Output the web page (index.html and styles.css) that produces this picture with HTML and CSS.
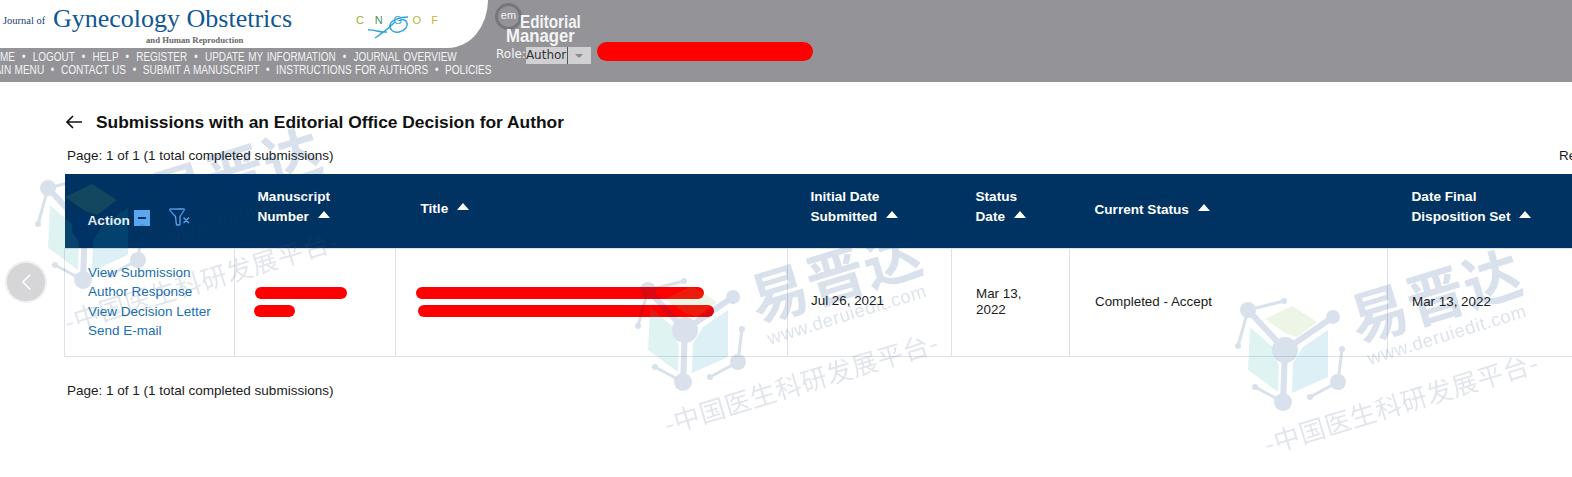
FILE: index.html
```html
<!DOCTYPE html>
<html lang="en">
<head>
<meta charset="utf-8">
<title>Submissions with an Editorial Office Decision for Author</title>
<link rel="stylesheet" href="styles.css">
</head>
<body>
<header class="top">
  <div class="brand">
    <div class="logo">
      <div class="journal">
        <span class="journal-of">Journal of</span>
        <span class="journal-name">Gynecology Obstetrics</span>
        <span class="journal-sub">and Human Reproduction</span>
      </div>
      <div class="cngof">
        <span class="c1">C</span><span class="c2">N</span><span class="c3">G</span><span class="c4">O</span><span class="c5">F</span>
        <svg class="swoosh" viewBox="0 0 42 24" aria-hidden="true"><path d="M40 1C32 1 23 4 22 9c-1 5 4 8 9 7 6-1 9-6 8-9-1-3-4-4-7-3M0 14c6-1 12 3 19 2M7 22C13 18 21 12 27 6" fill="none" stroke="#2ea3dc" stroke-width="1.4"/></svg>
      </div>
    </div>
    <nav class="nav">
      <div class="nav-line nav-one">HOME &nbsp;•&nbsp; LOGOUT &nbsp;•&nbsp; HELP &nbsp;•&nbsp; REGISTER &nbsp;•&nbsp; UPDATE MY INFORMATION &nbsp;•&nbsp; JOURNAL OVERVIEW</div>
      <div class="nav-line nav-two">MAIN MENU &nbsp;•&nbsp; CONTACT US &nbsp;•&nbsp; SUBMIT A MANUSCRIPT &nbsp;•&nbsp; INSTRUCTIONS FOR AUTHORS &nbsp;•&nbsp; POLICIES</div>
    </nav>
  </div>
  <div class="em">
    <div class="em-logo">
      <span class="em-ring">em</span>
      <span class="em-w1">Editorial</span>
      <span class="em-w2">Manager</span>
    </div>
    <div class="role-row">
      <span class="role-label">Role:</span>
      <span class="role-select"><span class="role-value">Author</span><span class="role-btn"><svg class="role-arrow" viewBox="0 0 8 4" aria-hidden="true"><path d="M0 0h8L4 4z" fill="#8a8a8a"/></svg></span></span>
      <span class="redact-top"></span>
    </div>
  </div>
</header>

<main class="main">
  <h1 class="title-row">
    <svg class="back" viewBox="0 0 18 14" aria-hidden="true"><path d="M17 7H2M8 1 2 7l6 6" fill="none" stroke="#111" stroke-width="1.7"/></svg>
    <span>Submissions with an Editorial Office Decision for Author</span>
  </h1>
  <div class="pager"><span>Page: 1 of 1 (1 total completed submissions)</span><span class="results">Results per page</span></div>
  <table class="grid">
    <colgroup>
      <col class="c-action"><col class="c-number"><col class="c-title"><col class="c-initial"><col class="c-date"><col class="c-status"><col class="c-final">
    </colgroup>
    <thead>
      <tr>
        <th class="th-action"><span class="action-head"><span class="action-label">Action</span><span class="minus"><span class="minus-bar"></span></span><svg class="filter" viewBox="0 0 22 18" aria-hidden="true"><path d="M1.500 1h13q1.500 0 .5 1.500L11 8.500V16q0 1-1 1H8.500Q7.500 17 7.300 16L6.500 8.500 1 2.500Q.5 1 1.500 1zM14.500 9.500l5.500 5.500M20 9.500 14.500 15" fill="none" stroke="#5aa7ef" stroke-width="1.300"/></svg></span></th>
        <th>Manuscript<br>Number<span class="sort"></span></th>
        <th class="th-title">Title<span class="sort"></span></th>
        <th>Initial Date<br>Submitted<span class="sort"></span></th>
        <th>Status<br>Date<span class="sort"></span></th>
        <th class="th-status">Current Status<span class="sort"></span></th>
        <th>Date Final<br>Disposition Set<span class="sort"></span></th>
      </tr>
    </thead>
    <tbody>
      <tr>
        <td class="links"><a href="#">View Submission</a><a href="#">Author Response</a><a href="#">View Decision Letter</a><a href="#">Send E-mail</a></td>
        <td class="redacted"><span class="bar bar-a"></span><span class="bar bar-b"></span></td>
        <td class="redacted"><span class="bar bar-c"></span><span class="bar bar-d"></span></td>
        <td class="cell-date">Jul 26, 2021</td>
        <td>Mar 13,<br>2022</td>
        <td>Completed - Accept</td>
        <td>Mar 13, 2022</td>
      </tr>
    </tbody>
  </table>
  <div class="pager pager-bottom"><span>Page: 1 of 1 (1 total completed submissions)</span></div>
</main>

<button class="prev" type="button" aria-label="Previous"><svg viewBox="0 0 12 20" aria-hidden="true"><path d="M10 2 2 10l8 8" fill="none" stroke="#fff" stroke-width="1.8"/></svg></button>

<svg class="defs" aria-hidden="true">
  <symbol id="wm-icon" viewBox="0 0 120 125">
    <path d="M35 24 62 11l25 16-20 15-12-4z" fill="#80bc58"/>
    <path d="M20 32l23 20 6 20-1 25-30-22z" fill="#30afaf"/>
    <path d="M98 35v47L62 98l1-30 10-16z" fill="#169bc3"/>
    <g stroke="#023780" fill="none">
      <path d="M18 15 55 55M103 22 55 55M55 55l-2 52" stroke-width="6"/>
      <path d="M18 15 54 6M18 15 8 51M53 107 25 92M108 87 80 102M108 87l4-33" stroke-width="3"/>
    </g>
    <g fill="#023780">
      <circle cx="55" cy="55" r="13"/><circle cx="18" cy="15" r="8"/><circle cx="103" cy="22" r="7"/><circle cx="53" cy="107" r="9"/><circle cx="108" cy="87" r="8"/>
      <circle cx="54" cy="6" r="3"/><circle cx="8" cy="51" r="3"/><circle cx="25" cy="92" r="3"/><circle cx="80" cy="102" r="3"/><circle cx="112" cy="54" r="3"/>
    </g>
  </symbol>
</svg>

<div class="wm wm-left">
  <svg class="wm-mark" aria-hidden="true"><use href="#wm-icon"/></svg>
  <span class="wm-brand">易晋达</span><span class="wm-url">www.deruiedit.com</span><span class="wm-slogan">-中国医生科研发展平台-</span>
</div>
<div class="wm wm-center">
  <svg class="wm-mark" aria-hidden="true"><use href="#wm-icon"/></svg>
  <span class="wm-brand">易晋达</span><span class="wm-url">www.deruiedit.com</span><span class="wm-slogan">-中国医生科研发展平台-</span>
</div>
<div class="wm wm-right">
  <svg class="wm-mark" aria-hidden="true"><use href="#wm-icon"/></svg>
  <span class="wm-brand">易晋达</span><span class="wm-url">www.deruiedit.com</span><span class="wm-slogan">-中国医生科研发展平台-</span>
</div>
</body>
</html>
```

FILE: styles.css
```css
* { box-sizing: border-box; }
html, body { margin: 0; height: 477px; overflow: hidden; background: #fff; }
body { position: relative; font-family: "Liberation Sans", Arial, sans-serif; color: #1b1b1b; }

.top { display: flex; height: 82px; background: #939398; color: #f4f4f4; }
.brand { width: 494px; flex: none; }
.logo { display: flex; width: 488px; height: 48px; background: #fff; border-bottom-right-radius: 40px 48px; }
.journal { position: relative; width: 356px; height: 48px; flex: none; }
.journal-of { position: absolute; left: 3px; top: 15px; font: 10.500px "Liberation Serif", serif; color: #17406f; }
.journal-name { position: absolute; left: 53px; top: 4px; font: 26px "Liberation Serif", serif; color: #0f5796; white-space: nowrap; }
.journal-sub { position: absolute; left: 146px; top: 35px; font: bold 8.700px "Liberation Serif", serif; color: #666; white-space: nowrap; }
.cngof { position: relative; display: flex; padding-top: 14px; font: 11px/13px "Liberation Sans", sans-serif; }
.cngof span { width: 18.800px; }
.c1 { color: #9aae2a; } .c2 { color: #4f8f5e; } .c3 { color: #2ea3dc; } .c4 { color: #a9bd3a; } .c5 { color: #c5b63a; }
.swoosh { position: absolute; left: 12px; top: 16px; width: 42px; height: 24px; }
.nav { margin-left: -17px; margin-top: 2.500px; }
.nav-line { height: 13.500px; font: 12px/13.500px "Liberation Sans", sans-serif; white-space: nowrap; transform-origin: left center; }
.nav-one { margin-left: 2px; word-spacing: 1px; transform: scaleX(.83); }
.nav-two { margin-left: 3px; word-spacing: .6px; transform: scaleX(.84); }

.em { display: flex; flex-direction: column; padding-left: 2px; }
.em-logo { position: relative; height: 42px; width: 100px; }
.em-ring { position: absolute; left: -1px; top: 3px; width: 27px; height: 27px; border: 3px solid #77777b; border-radius: 50%; font: 11px/19px "Liberation Sans", sans-serif; text-align: center; color: #f4f4f4; }
.em-w1, .em-w2 { position: absolute; font: bold 19px/15px "Liberation Sans", sans-serif; transform-origin: left center; color: #f4f4f4; }
.em-w1 { left: 24px; top: 14px; transform: scaleX(.8); }
.em-w2 { left: 10px; top: 28px; transform: scaleX(.88); }
.role-row { display: flex; align-items: flex-start; }
.role-label { font: 12px/18px "DejaVu Sans", sans-serif; margin-top: 3px; }
.role-select { display: flex; width: 65px; height: 17px; margin-top: 5px; background: #d0d0d2; color: #333; font: 12px/17px "DejaVu Sans", sans-serif; }
.role-value { width: 42px; border-right: 1px solid #555; }
.role-btn { flex: 1; display: flex; align-items: center; justify-content: center; }
.role-arrow { width: 8px; height: 4px; }
.redact-top { width: 216px; height: 19px; margin-left: 6px; border-radius: 10px; background: #f00; }

.main { padding: 0 0 0 65px; width: 1640px; }
.title-row { display: flex; align-items: center; height: 24px; margin: 28px 0 0; font-size: 17.400px; font-weight: bold; color: #111; }
.back { width: 18px; height: 14px; margin-right: 13px; }
.pager { display: flex; justify-content: space-between; width: 1507px; height: 16px; margin: 14px 0 0; padding-left: 2px; font-size: 13.500px; line-height: 16px; }
.results { width: 13px; white-space: nowrap; overflow: hidden; }
.grid { table-layout: fixed; border-collapse: collapse; width: 1508px; margin: 10px 0 0 -1px; }
.c-action { width: 170px; } .c-number { width: 161px; } .c-title { width: 392px; } .c-initial { width: 164px; } .c-date { width: 118px; } .c-status { width: 318px; } .c-final { width: 185px; }
.grid th { height: 74px; padding: 0 0 7px 23px; background: #003361; color: #fff; font-size: 13.600px; font-weight: bold; line-height: 20px; text-align: left; }
.grid th.th-action { vertical-align: top; padding: 27px 0 0 23px; }
.grid th.th-title { vertical-align: top; padding: 25px 0 0 25px; }
.grid th.th-status { padding-bottom: 1px; }
.grid th:nth-child(5), .grid th:nth-child(7), .grid td:nth-child(5), .grid td:nth-child(7) { padding-left: 24px; }
.grid th:nth-child(6), .grid td:nth-child(6) { padding-left: 25px; }
.action-head { display: flex; align-items: flex-start; }
.action-label { margin-top: 10px; }
.minus { display: flex; align-items: center; justify-content: center; width: 16px; height: 16px; margin: 9px 0 0 4px; background: #5aa7ef; }
.minus-bar { width: 8px; height: 2px; background: #003361; }
.filter { width: 22px; height: 18px; margin: 7px 0 0 19px; }
.sort { display: inline-block; width: 0; height: 0; margin-left: 9px; vertical-align: 3px; border-left: 6px solid transparent; border-right: 6px solid transparent; border-bottom: 7px solid #fff; }
.grid td { height: 108px; padding: 0 0 1px 23px; border: 1px solid #dde2ea; font-size: 13.400px; line-height: 15.500px; vertical-align: middle; }
.grid td.cell-date { padding-bottom: 3px; }
.grid td.links { padding-bottom: 1px; font-size: 13.500px; line-height: 19.400px; }
.links a { display: block; color: #1a6fb0; text-decoration: none; }
.grid td.redacted { padding: 38px 0 0; vertical-align: top; }
.bar { display: block; height: 12px; border-radius: 6px; background: #f00; }
.bar-a { width: 92px; margin-left: 20px; }
.bar-b { width: 41px; margin: 6px 0 0 19px; }
.bar-c { width: 288px; margin-left: 20px; }
.bar-d { width: 296px; margin: 6px 0 0 22px; }
.pager-bottom { margin-top: 26px; }

.prev { position: absolute; left: 5px; top: 261px; width: 42px; height: 42px; padding: 0; border: 2px solid #efeff0; border-radius: 50%; background: #d6d6d8; display: flex; align-items: center; justify-content: center; }
.prev svg { width: 11px; height: 18px; }

.defs { position: absolute; width: 0; height: 0; }
.wm { position: absolute; width: 120px; height: 125px; opacity: .15; pointer-events: none; }
.wm-left { left: 30px; top: 173px; }
.wm-center { left: 630px; top: 275px; }
.wm-right { left: 1230px; top: 295px; }
.wm-mark { display: block; width: 120px; height: 125px; }
.wm-brand, .wm-url, .wm-slogan { position: absolute; transform: translate(-50%, -50%) rotate(-17deg); white-space: nowrap; }
.wm-brand { left: 205px; top: -2px; font: 700 58px/1 "Noto Sans CJK SC", sans-serif; letter-spacing: 1px; color: #023780; }
.wm-url { left: 217px; top: 40px; font: 18.500px/1 "Liberation Sans", sans-serif; letter-spacing: .6px; color: #1c4480; }
.wm-slogan { left: 171px; top: 107px; font: 400 26px/1 "Noto Sans CJK SC", sans-serif; letter-spacing: .6px; color: #3e5880; }
```
